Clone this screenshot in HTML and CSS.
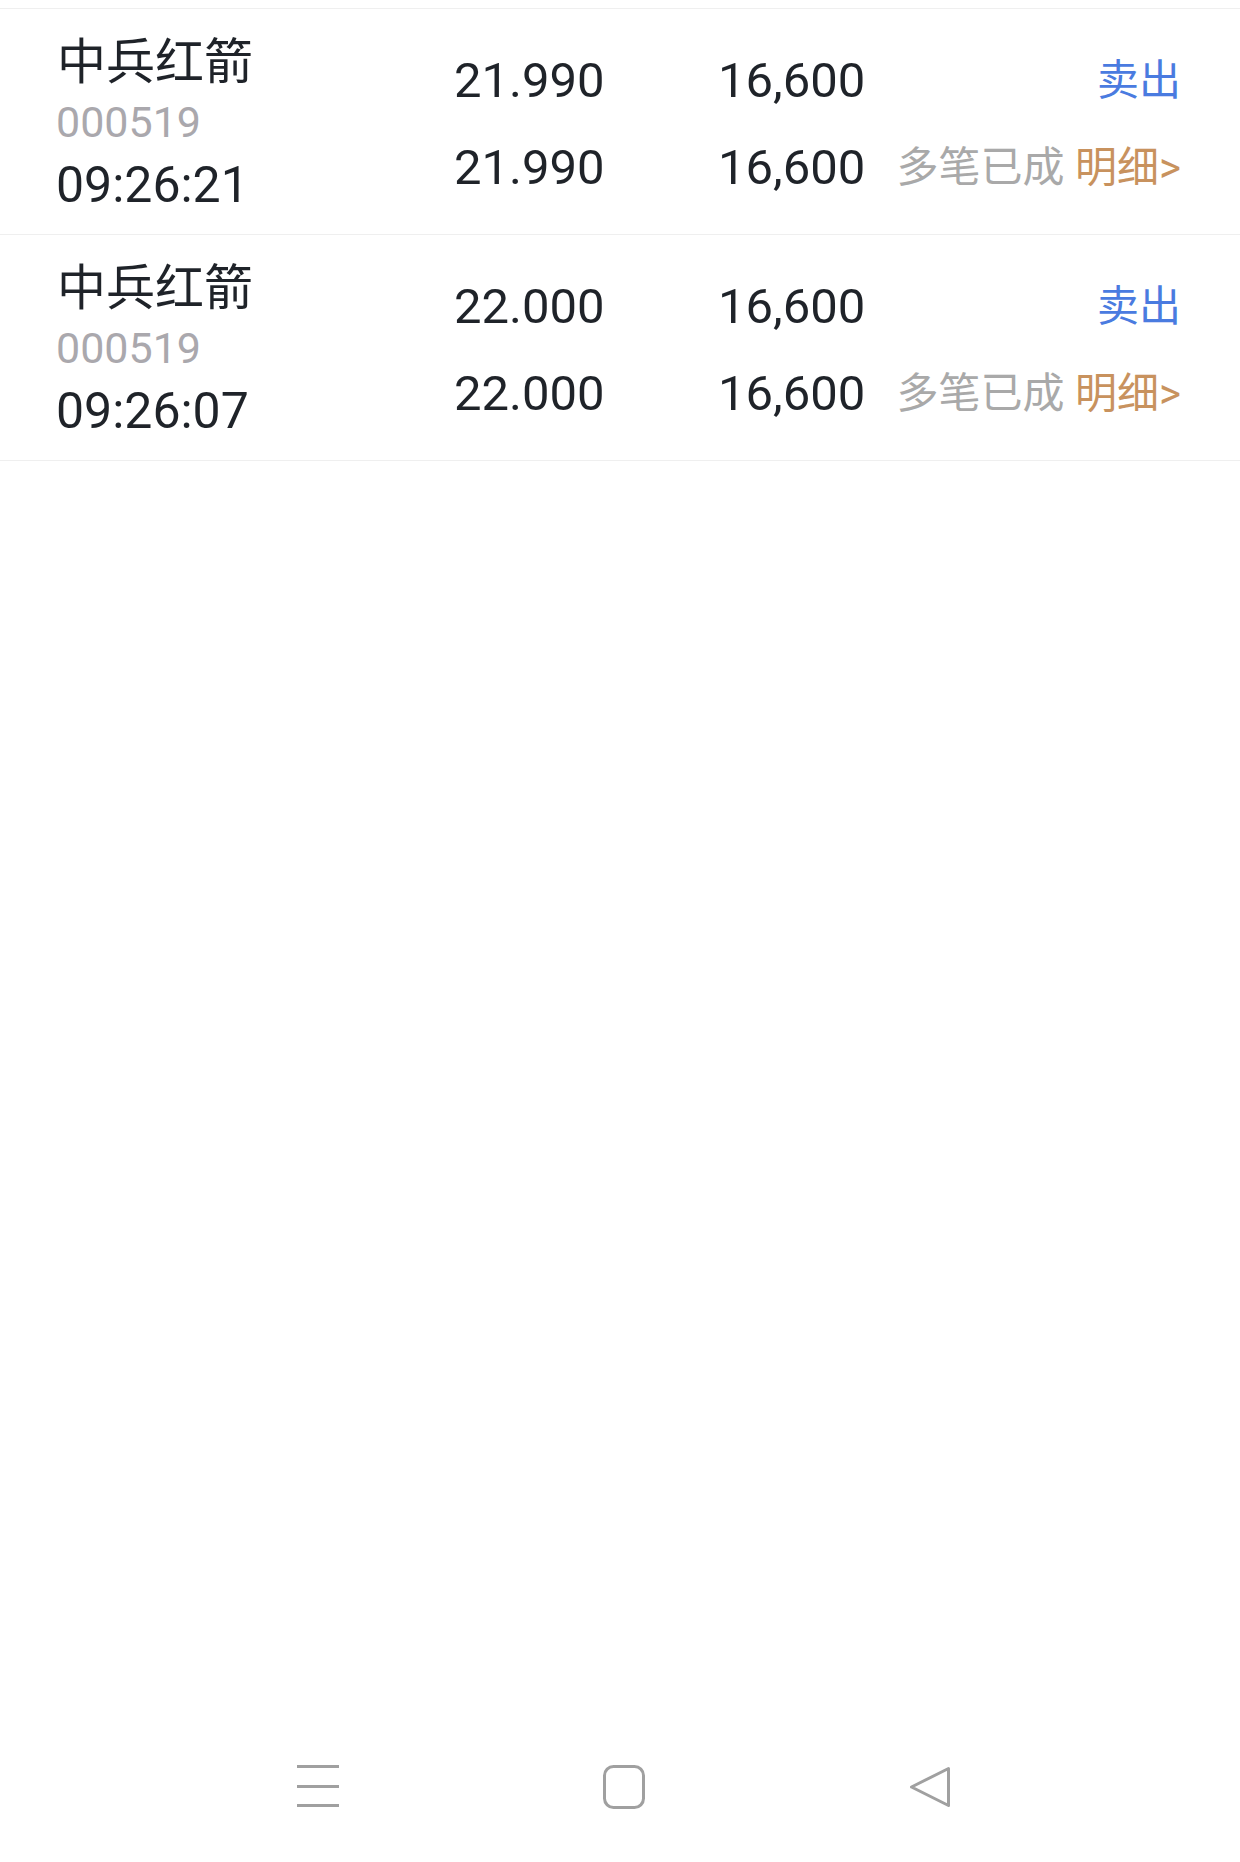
FILE: index.html
```html
<!DOCTYPE html>
<html lang="zh-CN">
<head>
    <meta charset="UTF-8">
    <meta name="viewport" content="width=device-width, initial-scale=1.0">
    <title>委托</title>
    <link rel="stylesheet" href="styles.css">
</head>
<body>
    <!-- 委托列表 -->
    <main class="list">
        <div class="row">
            <div class="col-stock">
                <div class="stock-name">中兵红箭</div>
                <div class="stock-code">000519</div>
                <div class="stock-time">09:26:21</div>
            </div>
            <div class="col-price">
                <div class="cell">21.990</div>
                <div class="cell">21.990</div>
            </div>
            <div class="col-qty">
                <div class="cell">16,600</div>
                <div class="cell">16,600</div>
            </div>
            <div class="col-status">
                <div class="cell side-sell">卖出</div>
                <div class="cell status">多笔已成 <span class="detail">明细&gt;</span></div>
            </div>
        </div>

        <div class="row">
            <div class="col-stock">
                <div class="stock-name">中兵红箭</div>
                <div class="stock-code">000519</div>
                <div class="stock-time">09:26:07</div>
            </div>
            <div class="col-price">
                <div class="cell">22.000</div>
                <div class="cell">22.000</div>
            </div>
            <div class="col-qty">
                <div class="cell">16,600</div>
                <div class="cell">16,600</div>
            </div>
            <div class="col-status">
                <div class="cell side-sell">卖出</div>
                <div class="cell status">多笔已成 <span class="detail">明细&gt;</span></div>
            </div>
        </div>
    </main>

    <!-- 系统导航栏 -->
    <nav class="nav-bar">
        <svg class="nav-icon" viewBox="0 0 42 44" width="42" height="44">
            <path d="M0 1.5H42M0 21.5H42M0 40.5H42" fill="none" stroke="#a0a0a0" stroke-width="3"/>
        </svg>
        <svg class="nav-icon" viewBox="0 0 42 44" width="42" height="44">
            <rect x="1.5" y="1.5" width="39" height="41" rx="9" fill="none" stroke="#a0a0a0" stroke-width="3"/>
        </svg>
        <svg class="nav-icon" viewBox="0 0 42 44" width="42" height="44">
            <path d="M39.5 3.5L2.5 22L39.5 40.5Z" fill="none" stroke="#a0a0a0" stroke-width="3" stroke-linejoin="round"/>
        </svg>
    </nav>
</body>
</html>
```

FILE: styles.css
```css
/* 页面基础 */
html,
body {
    margin: 0;
    height: 100%;
}
body {
    display: flex;
    flex-direction: column;
    background: #fff;
    color: #1f2329;
    font-family: Roboto, "Noto Sans CJK SC", sans-serif;
}

/* 列表 */
.list {
    flex: 1;
    padding-top: 8px;
}
.row {
    display: flex;
    height: 225px;
    padding: 0 59px 0 56px;
    border-top: 1px solid #efefef;
}
.row:last-child {
    border-bottom: 1px solid #efefef;
}

/* 股票信息列 */
.col-stock {
    width: 398px;
    padding-top: 25px;
}
.stock-name {
    font-size: 49px;
    line-height: 58px;
    padding-left: 1px;
}
.stock-code {
    font-size: 43px;
    line-height: 60px;
    color: #aaa8ad;
}
.stock-time {
    font-size: 50px;
    line-height: 66px;
}

/* 价格 / 数量 / 状态 */
.col-price,
.col-qty,
.col-status {
    padding-top: 28px;
}
.col-price {
    width: 264px;
}
.col-qty {
    width: 150px;
}
.col-status {
    flex: 1;
    text-align: right;
}
.cell {
    font-size: 49px;
    line-height: 87px;
    white-space: nowrap;
}
.side-sell {
    font-size: 42px;
    color: #4a7be0;
}
.status {
    font-size: 42px;
    color: #a9a9a9;
}
.detail {
    color: #c8925e;
}

/* 底部导航 */
.nav-bar {
    display: flex;
    align-items: center;
    justify-content: space-between;
    height: 150px;
    padding: 0 289px 0 297px;
}
.nav-icon {
    display: block;
}
```
